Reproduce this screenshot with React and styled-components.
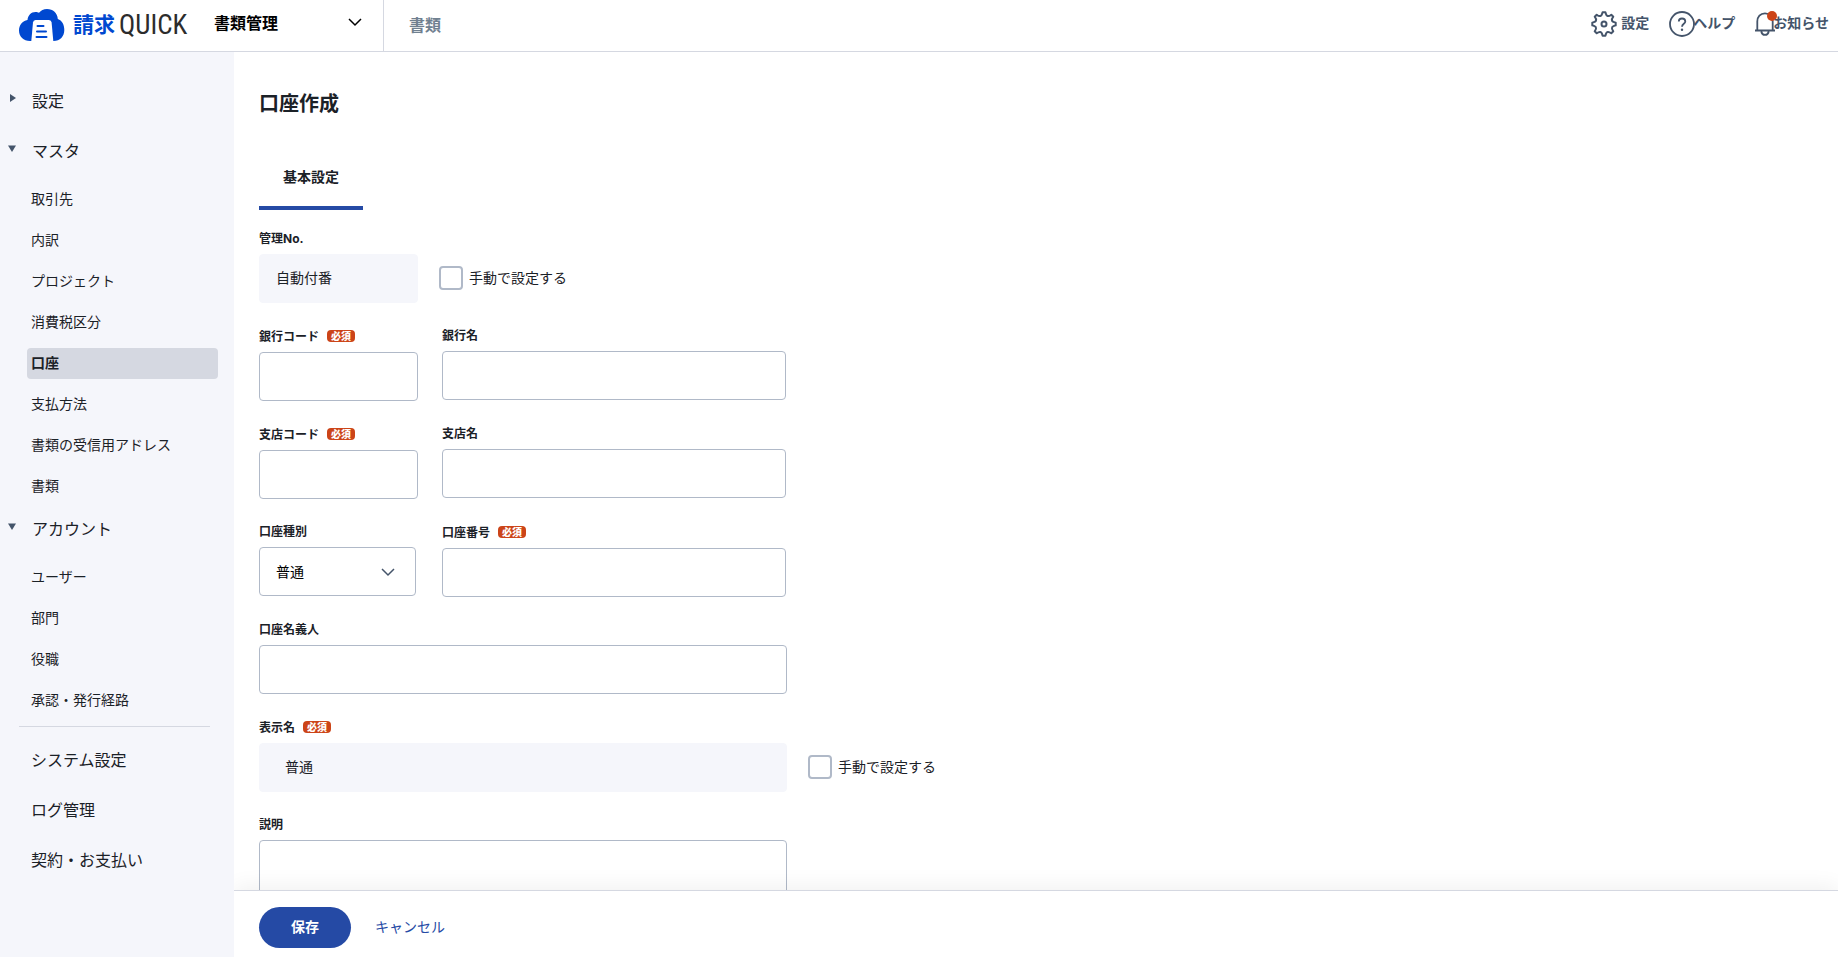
import React, { useState } from 'react';
import styled, { createGlobalStyle } from 'styled-components';

const masterItems = ['取引先', '内訳', 'プロジェクト', '消費税区分', '口座', '支払方法', '書類の受信用アドレス', '書類'];
const accountItems = ['ユーザー', '部門', '役職', '承認・発行経路'];
const otherItems = ['システム設定', 'ログ管理', '契約・お支払い'];

const CloudLogo = () => (
    <svg width="46" height="33" viewBox="0 0 46 33" aria-hidden="true">
        <path fill="#0048d0" d="M11 32C4.500 32 0 27.500 0 21.500C0 16 3.500 12 8.500 11C9 6.500 12 3 16.500 3C18 3 19 3.200 20 3.800C22 1.300 24.500 0 28 0C34 0 38.500 4 38.800 10C43 11.500 45.300 15.500 45.300 21C45.300 27.500 41 32 34.500 32Z" />
        <path fill="#fff" d="M16.500 11H30Q32.300 11 32.600 13.500L34.300 32H12.300L14 13.500Q14.300 11 16.500 11Z" />
        <path stroke="#0048d0" strokeWidth="2" strokeLinecap="round" d="M18.500 17H24.500M18 22.500H27M17.500 28H27.500" />
    </svg>
);

const GearIcon = () => (
    <svg width="26" height="26" viewBox="0 0 26 26" fill="none" stroke="#44546a" strokeWidth="2" strokeLinejoin="round" aria-hidden="true">
        <path d="M11.600 1.300H14.400Q15.300 4.800 16.500 5Q18 5.500 20.300 3.700L22.300 5.700Q20.500 8 21 9.500Q21.300 10.800 24.700 11.600V14.400Q21.300 15.200 21 16.500Q20.500 18 22.300 20.300L20.300 22.300Q18 20.500 16.500 21Q15.300 21.200 14.400 24.700H11.600Q10.700 21.200 9.500 21Q8 20.500 5.700 22.300L3.700 20.300Q5.500 18 5 16.500Q4.700 15.200 1.300 14.400V11.600Q4.700 10.800 5 9.500Q5.500 8 3.700 5.700L5.700 3.700Q8 5.500 9.500 5Q10.700 4.800 11.600 1.300Z" />
        <circle cx="13" cy="13" r="2.500" />
    </svg>
);

const HelpIcon = () => (
    <svg width="26" height="26" viewBox="0 0 26 26" fill="none" stroke="#44546a" strokeWidth="1.800" aria-hidden="true">
        <circle cx="13" cy="13" r="12" />
        <path d="M9.800 10.500C9.800 8.600 11.200 7.500 13 7.500S16.300 8.700 16.300 10.400C16.300 12.800 13 12.800 13 15.800" />
        <circle cx="13" cy="18.800" r="1.200" fill="#44546a" stroke="none" />
    </svg>
);

const BellIcon = () => (
    <svg width="22" height="26" viewBox="0 0 22 26" aria-hidden="true">
        <path fill="none" stroke="#44546a" strokeWidth="1.800" d="M0 19.500H20M2.300 19V10.500C2.300 5.500 5.300 2.300 10 2.300S17.700 5.500 17.700 10.500V19M6.300 20.500C7 25 13 25 13.700 20.500" />
        <circle cx="17" cy="5" r="5" fill="#cc4418" />
    </svg>
);

const Chevron = () => (
    <svg width="14" height="10" viewBox="0 0 14 10" fill="none" stroke="currentColor" strokeWidth="1.500" aria-hidden="true">
        <path d="M1 2L7 8L13 2" />
    </svg>
);

const Field = ({ id, label, required, children }) => (
    <FieldBox>
        <LabelRow $required={required}>
            <label htmlFor={id}>{label}</label>
            {required && <Badge>必須</Badge>}
        </LabelRow>
        {children}
    </FieldBox>
);

const App = () => {
    const [manualNo, setManualNo] = useState(false)
    const [manualName, setManualName] = useState(false)

    const onSubmit = (e) => {
        e.preventDefault();
    }

    return (
        <Page>
            <GlobalStyle />
            <Header>
                <Logo href="#">
                    <CloudLogo />
                    <LogoText><LogoKanji>請求</LogoKanji>QUICK</LogoText>
                </Logo>
                <MenuButton type="button">書類管理<Chevron /></MenuButton>
                <HeaderLink href="#">書類</HeaderLink>
                <HeaderTools>
                    <Tool type="button" $gap={4}><GearIcon /><span>設定</span></Tool>
                    <Tool type="button" $gap={-2}><HelpIcon /><span>ヘルプ</span></Tool>
                    <Tool type="button" $gap={-4}><BellIcon /><span>お知らせ</span></Tool>
                </HeaderTools>
            </Header>
            <Body>
                <Sidebar>
                    <GroupButton type="button"><Arrow />設定</GroupButton>
                    <GroupButton type="button"><Arrow $open />マスタ</GroupButton>
                    <SubList>
                        {masterItems.map(item => (
                            <li key={item}><SubLink href="#" $active={item === '口座'}>{item}</SubLink></li>
                        ))}
                    </SubList>
                    <GroupButton type="button"><Arrow $open />アカウント</GroupButton>
                    <SubList>
                        {accountItems.map(item => (
                            <li key={item}><SubLink href="#">{item}</SubLink></li>
                        ))}
                    </SubList>
                    <Divider />
                    {otherItems.map(item => <SideLink key={item} href="#">{item}</SideLink>)}
                </Sidebar>
                <Main onSubmit={onSubmit}>
                    <Scroll>
                        <Title>口座作成</Title>
                        <Tabs>
                            <Tab type="button">基本設定</Tab>
                        </Tabs>
                        <Row>
                            <Field id="no" label="管理No.">
                                <ReadOnly id="no" $size="code" readOnly value="自動付番" />
                            </Field>
                            <Check>
                                <input type="checkbox" checked={manualNo} onChange={(e) => setManualNo(e.target.checked)} />
                                <span>手動で設定する</span>
                            </Check>
                        </Row>
                        <Row>
                            <Field id="bankCode" label="銀行コード" required><Input id="bankCode" $size="code" /></Field>
                            <Field id="bankName" label="銀行名"><Input id="bankName" $size="name" /></Field>
                        </Row>
                        <Row>
                            <Field id="branchCode" label="支店コード" required><Input id="branchCode" $size="code" /></Field>
                            <Field id="branchName" label="支店名"><Input id="branchName" $size="name" /></Field>
                        </Row>
                        <Row>
                            <Field id="type" label="口座種別">
                                <SelectBox>
                                    <Select id="type" defaultValue="普通">
                                        <option>普通</option>
                                        <option>当座</option>
                                    </Select>
                                    <Chevron />
                                </SelectBox>
                            </Field>
                            <Field id="number" label="口座番号" required><Input id="number" $size="name" /></Field>
                        </Row>
                        <Row>
                            <Field id="holder" label="口座名義人"><Input id="holder" $size="full" /></Field>
                        </Row>
                        <Row>
                            <Field id="display" label="表示名" required>
                                <ReadOnly id="display" $size="full" $indent readOnly value="普通" />
                            </Field>
                            <Check>
                                <input type="checkbox" checked={manualName} onChange={(e) => setManualName(e.target.checked)} />
                                <span>手動で設定する</span>
                            </Check>
                        </Row>
                        <Row>
                            <Field id="note" label="説明"><TextArea id="note" $size="full" /></Field>
                        </Row>
                    </Scroll>
                    <Footer>
                        <SaveButton type="submit">保存</SaveButton>
                        <CancelLink href="#">キャンセル</CancelLink>
                    </Footer>
                </Main>
            </Body>
        </Page>
    );
};

const widths = { code: '159px', name: '344px', full: '528px' };

const GlobalStyle = createGlobalStyle`
    * {
        box-sizing: border-box;
    }
    body {
        margin: 0;
    }
    body, button, input, select, textarea {
        font-family: Inter, "Noto Sans CJK JP", sans-serif;
        font-size: 14px;
        color: #1b2127;
    }
    a {
        color: inherit;
        text-decoration: none;
    }
    button {
        border: 0;
        padding: 0;
        background: none;
        cursor: pointer;
    }
`

const Page = styled.div`
    height: 100vh;
    display: flex;
    flex-direction: column;
    background-color: white;
`

const Header = styled.header`
    flex: none;
    height: 52px;
    display: flex;
    border-bottom: 1px solid #d5d8e1;
`

const Logo = styled.a`
    display: flex;
    align-items: center;
    gap: 8px;
    padding: 0 0 1px 19px;
    width: 214px;
`

const LogoText = styled.span`
    display: flex;
    align-items: center;
    gap: 4px;
    color: #2c2c2c;
    font-family: "Liberation Sans Narrow", "Roboto Condensed", sans-serif;
    font-size: 27px;
    line-height: 32px;
`

const LogoKanji = styled.span`
    padding-bottom: 4px;
    font-family: "Noto Sans CJK JP", sans-serif;
    font-size: 21px;
    font-weight: 700;
    line-height: 28px;
    color: #0048d0;
`

const MenuButton = styled.button`
    display: flex;
    align-items: center;
    justify-content: space-between;
    width: 170px;
    padding: 0 21px 7px 0;
    border-right: 1px solid #d5d8e1;
    font-size: 16px;
    font-weight: 700;
    color: black;
`

const HeaderLink = styled.a`
    display: flex;
    align-items: center;
    padding: 0 25px 4px;
    font-size: 16px;
    font-weight: 700;
    color: #708090;
`

const HeaderTools = styled.div`
    display: flex;
    align-items: center;
    gap: 20px;
    margin-left: auto;
    padding: 0 9px 4px 0;
`

const Tool = styled.button`
    display: flex;
    align-items: center;
    font-weight: 700;
    color: #44546a;

    svg {
        flex: none;
    }
    span {
        margin-left: ${props => props.$gap}px;
        padding-bottom: 3px;
    }
`

const Body = styled.div`
    flex: 1;
    min-height: 0;
    display: flex;
`

const Sidebar = styled.nav`
    flex: none;
    width: 234px;
    padding-top: 24px;
    background-color: #f5f6fb;
    overflow: hidden;
`

const GroupButton = styled.button`
    display: flex;
    align-items: center;
    width: 100%;
    height: 50px;
    padding: 0 0 2px 8px;
    font-size: 16px;
`

const Arrow = styled.span`
    width: 8px;
    height: 8px;
    margin: 0 16px 4px 0;
    background-color: #44546a;
    clip-path: ${props => props.$open ? 'polygon(0 20%, 100% 20%, 50% 100%)' : 'polygon(25% 0, 100% 50%, 25% 100%)'};
`

const SubList = styled.ul`
    display: flex;
    flex-direction: column;
    gap: 10px;
    margin: 0;
    padding: 8px 16px 2px 27px;
    list-style: none;
`

const SubLink = styled.a`
    display: block;
    height: 31px;
    padding: 0 4px;
    border-radius: 4px;
    line-height: 29px;
    font-weight: ${props => props.$active ? 700 : 400};
    background-color: ${props => props.$active ? '#d5d8e1' : 'transparent'};
`

const Divider = styled.hr`
    margin: 8px 24px 8px 19px;
    border: 0;
    border-top: 1px solid #d5d8e1;
`

const SideLink = styled.a`
    display: block;
    padding-left: 31px;
    font-size: 16px;
    line-height: 50px;
`

const Main = styled.form`
    flex: 1;
    min-width: 0;
    display: flex;
    flex-direction: column;
`

const Scroll = styled.div`
    flex: 1;
    min-height: 0;
    overflow: hidden;
    padding: 37px 25px 0;
`

const Title = styled.h1`
    margin: 0;
    font-size: 20px;
    line-height: 30px;
`

const Tabs = styled.div`
    display: flex;
    margin: 23px 0 20px;
`

const Tab = styled.button`
    height: 68px;
    padding: 4px 24px 0;
    border-bottom: 4px solid #254aa5;
    font-weight: 700;
`

const Row = styled.div`
    display: flex;
    align-items: flex-start;
    margin-bottom: 24px;
`

const FieldBox = styled.div`
    display: flex;
    flex-direction: column;
    gap: 7px;
    min-width: 159px;

    & + & {
        margin-left: 24px;
    }
`

const LabelRow = styled.div`
    display: flex;
    align-items: center;
    gap: 8px;
    height: ${props => props.$required ? 18 : 17}px;
    font-size: 12px;
    font-weight: 700;

    label {
        padding-bottom: 2px;
    }
`

const Badge = styled.span`
    padding: 0 4px;
    border-radius: 4px;
    background-color: #cc4418;
    color: white;
    font-size: 10px;
    font-weight: 900;
    line-height: 12px;
`

const Input = styled.input`
    width: ${props => widths[props.$size]};
    height: 49px;
    padding: 0 17px;
    border: 1px solid #b0b9c8;
    border-radius: 4px;
    background-color: white;
    outline: none;
`

const ReadOnly = styled(Input)`
    border-color: #f5f6fb;
    background-color: #f5f6fb;
    padding: 0 ${props => props.$indent ? 25 : 16}px 3px;
`

const TextArea = styled(Input).attrs({ as: 'textarea' })`
    display: block;
    height: 120px;
    resize: none;
`

const SelectBox = styled.div`
    display: grid;
    width: 157px;
    color: #44546a;

    select, svg {
        grid-area: 1 / 1;
    }
    svg {
        align-self: center;
        justify-self: end;
        margin-right: 21px;
        pointer-events: none;
    }
`

const Select = styled.select`
    height: 49px;
    padding: 0 16px 1px;
    border: 1px solid #b0b9c8;
    border-radius: 4px;
    background-color: white;
    color: black;
    appearance: none;
    outline: none;
`

const Check = styled.label`
    display: flex;
    align-items: center;
    align-self: flex-end;
    gap: 6px;
    height: 49px;
    margin-left: 21px;
    padding-bottom: 1px;

    input {
        appearance: none;
        width: 24px;
        height: 24px;
        margin: 0;
        border: 2px solid #b0b9c8;
        border-radius: 4px;
        background-color: white;
    }
    input:checked {
        background-color: #254aa5;
    }
    span {
        padding-bottom: 2px;
    }
`

const Footer = styled.div`
    flex: none;
    display: flex;
    align-items: center;
    gap: 24px;
    height: 67px;
    padding: 6px 25px 0;
    border-top: 1px solid #d5d8e1;
    background-color: white;
    box-shadow: 0 -4px 20px rgba(0, 0, 0, 0.06);
    clip-path: inset(-24px 0 0 0);
`

const SaveButton = styled.button`
    width: 92px;
    height: 41px;
    padding-bottom: 2px;
    border-radius: 21px;
    background-color: #254aa5;
    color: white;
    font-weight: 700;
`

const CancelLink = styled.a`
    padding-bottom: 2px;
    color: #254aa5;
`

export default App;
